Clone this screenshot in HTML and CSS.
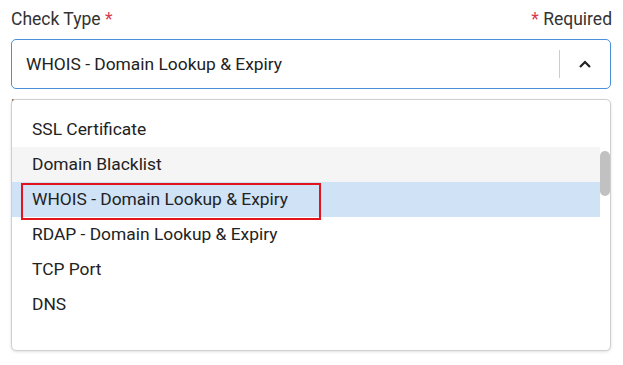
FILE: index.html
```html
<!DOCTYPE html>
<html>
<head>
<meta charset="utf-8">
<link rel="stylesheet" href="styles.css">
</head>
<body>
<div class="field">
  <div class="label-row">
    <span class="label">Check Type <span class="req">*</span></span>
    <span class="required"><span class="req">*</span> Required</span>
  </div>
  <div class="select-wrap">
    <div class="select">
      <span class="value">WHOIS - Domain Lookup &amp; Expiry</span>
      <span class="sep"></span>
      <span class="arrow">
        <svg width="14" height="10" viewBox="0 0 14 10"><path d="M2 8 L7 3 L12 8" fill="none" stroke="#222" stroke-width="2.2"/></svg>
      </span>
    </div>
    <p class="help">Look up registration details and expiry date to check for <a href="#">domain expiry and changes</a> in time.</p>
    <div class="menu">
      <ul class="options">
        <li>SSL Certificate</li>
        <li class="hover">Domain Blacklist</li>
        <li class="selected"><span class="mark">WHOIS - Domain Lookup &amp; Expiry</span></li>
        <li>RDAP - Domain Lookup &amp; Expiry</li>
        <li>TCP Port</li>
        <li>DNS</li>
      </ul>
      <div class="scroll-thumb"></div>
    </div>
  </div>
</div>
</body>
</html>
```
FILE: styles.css
```css
* { box-sizing: border-box; }
body {
  margin: 0;
  background: #fff;
  font-family: Roboto, "Liberation Sans", sans-serif;
  color: #222;
  width: 623px;
  height: 365px;
  overflow: hidden;
}
.field {
  padding: 7px 12px 0 11px;
}
.label-row {
  display: flex;
  justify-content: space-between;
  font-size: 17.5px;
  line-height: 24px;
  color: #333;
}
.label-row .required { margin-right: -1px; }
.req { color: #d93a4d; }
.select-wrap {
  position: relative;
  margin-top: 8px;
}
.select {
  height: 50px;
  border: 1px solid #4a90d9;
  border-radius: 5px;
  display: flex;
  align-items: center;
  padding-left: 14px;
  font-size: 17.4px;
  color: #222;
}
.value { flex: 1; }
.sep {
  width: 1px;
  height: 28px;
  background: #ccc;
}
.arrow {
  width: 50px;
  display: flex;
  justify-content: center;
  align-items: center;
}
.arrow svg { display: block; }
.help {
  margin: 6px 0 0;
  font-size: 14px;
  line-height: 20px;
  color: #555;
  white-space: nowrap;
  overflow: hidden;
}
.help a { color: #2a6fd6; text-decoration: none; }
.menu {
  position: absolute;
  left: 0;
  right: 0;
  top: 60px;
  height: 252px;
  background: #fff;
  border: 1px solid #cfcfcf;
  border-radius: 5px;
  box-shadow: 0 1px 3px rgba(0,0,0,0.12);
  padding-top: 12px;
}
.options {
  list-style: none;
  margin: 0;
  padding: 0;
  margin-right: 10px;
}
.options li {
  height: 35px;
  line-height: 34px;
  padding-left: 20px;
  font-size: 17.4px;
  color: #222;
}
.options li.hover { background: #f5f5f5; }
.options li.selected { background: #cfe2f6; position: relative; }
.mark::after {
  content: "";
  position: absolute;
  left: 9px;
  top: 1px;
  width: 296px;
  height: 33px;
  border: 2px solid #e3141b;
}
.scroll-thumb {
  position: absolute;
  right: 0;
  top: 51px;
  width: 10px;
  height: 45px;
  background: #c1c1c1;
  border-radius: 5px;
}
```
